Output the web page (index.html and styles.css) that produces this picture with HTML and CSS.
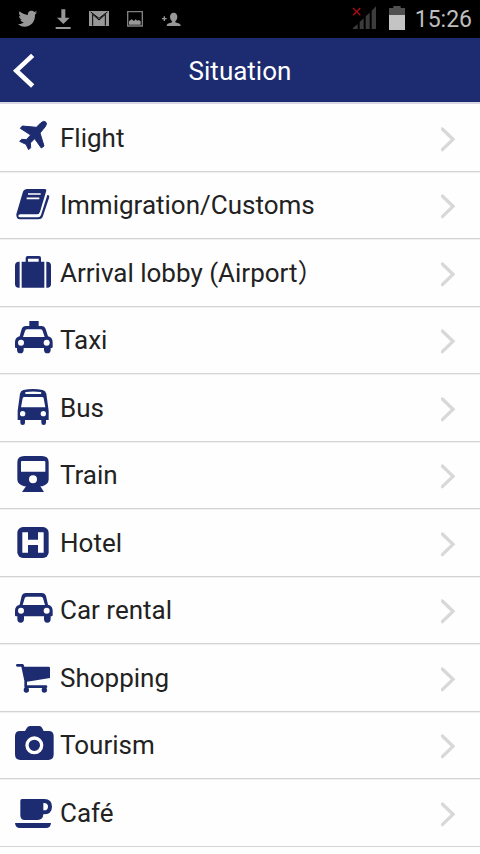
FILE: index.html
```html
<!DOCTYPE html>
<html lang="en">
<head>
<meta charset="utf-8">
<meta name="viewport" content="width=device-width, initial-scale=1">
<title>Situation</title>
<link rel="stylesheet" href="styles.css">
</head>
<body>
<svg class="defs" aria-hidden="true">
  <symbol id="chevron" viewBox="783 9 45 132"><path d="M787 48 819 79 787 110" fill="none" stroke="#d8d8d8" stroke-width="10" stroke-linecap="round" stroke-linejoin="miter"/></symbol>
</svg>
<div class="status">
  <div class="notices">
    <svg width="20" height="22" viewBox="51 24 60 66"><path d="M111 37c-2 1-4 2-6 2 3-2 4-4 5-6-2 1-5 2-7 3-2-3-5-4-8-4-8 0-13 6-11 13-10-1-18-4-25-11-4 6-1 12 3 15-2 0-4-1-5-2 0 6 4 10 9 12h-5c2 4 5 8 11 8-5 4-11 6-18 5 5 5 11 8 19 8 21 0 33-17 32-36 2-2 5-4 6-7z"/></svg>
    <svg width="16" height="22" viewBox="165 24 48 66"><path d="M184 28h12v25h13l-19 19-19-19h13zM167 81h45v6h-45z"/></svg>
    <svg width="20" height="22" viewBox="267 24 60 66"><path d="M267 33h60v45h-60z"/><path d="M278 77V43l19 17 19-17v34M272 36l25 19 25-19" fill="none" stroke="#000" stroke-width="3"/></svg>
    <svg width="16" height="22" viewBox="381 24 48 66"><path d="M383 35h44v43h-44z" fill="none" stroke="#808080" stroke-width="4"/><path d="M387 74V64l8-6 7 5 5-5 5 4 4-2 6 4v10z"/></svg>
    <svg width="20" height="22" viewBox="483 24 60 66"><path d="M491 49h4v5h5v4h-5v5h-4v-5h-5v-4h5zM521 38c7 0 11 5 11 12 0 6-3 11-6 14v3l13 4q3 2 3 7h-42q0-5 3-7l13-4v-3c-3-3-6-8-6-14 0-7 4-12 11-12z"/></svg>
  </div>
  <div class="device">
    <svg width="27" height="24" viewBox="93 18 81 72"><path d="M96 87v-3l14-12v15zM116 87V66l12-11v32zM134 87V49l12-11v49zM152 87V32l13-13v68z" fill="#3c3c3c"/><path d="M96 24l22 22m0-22L96 46" stroke="#a80c14" stroke-width="4"/></svg>
    <svg width="16" height="24" viewBox="204 18 48 72"><path d="M217 18h22v6h13v21h-48V24h13z" fill="#505050"/><path d="M204 45h48v45h-48z" fill="#c4c4c4"/></svg>
    <time>15:26</time>
  </div>
</div>
<header class="bar">
  <button class="back" type="button" aria-label="Back"><svg width="24" height="36" viewBox="36 162 72 108"><path d="M98 169 49 215 98 261" fill="none" stroke="#fff" stroke-width="14"/></svg></button>
  <h1>Situation</h1>
</header>
<main>
<ul class="list">
  <li><a href="#flight"><svg class="icon" viewBox="36 30 132 132"><path d="M138 52q4 5-3 14l-15 18 12 39-8 6-20-28-13 13 1 14-6 6-8-16-19-9 6-6 14 1 13-14-31-20 6-7 42 4 13-13q10-9 16-2z" stroke="#1d2b70" stroke-width="3" stroke-linejoin="round"/></svg><span>Flight</span><svg class="go"><use href="#chevron"/></svg></a></li>
  <li><a href="#immigration"><svg class="icon" viewBox="36 234 132 132"><path d="M82 252h52q7 0 4 8l-18 60q-2 8-10 8H61q-6 0-6 5 0 4 6 4h53q7 0 9-7l19-60q6-1 6 6l-19 57q-3 10-14 10H60q-12 0-11-15l19-65q3-11 14-11z"/><path d="M84 267h38M80 280h38" fill="none" stroke="#fff" stroke-width="5"/></svg><span>Immigration/Customs</span><svg class="go"><use href="#chevron"/></svg></a></li>
  <li><a href="#arrival"><svg class="icon" viewBox="36 30 132 132"><path d="M59 65v78h-3q-11 0-11-11V77q0-12 12-12zM139 65v78h3q11 0 11-11V77q0-12-12-12zM65 65h12V54q0-6 6-6h34q6 0 6 6v11h10v78H65zM84 56v9h32v-9z" fill-rule="evenodd"/></svg><span>Arrival lobby (Airport）</span><svg class="go"><use href="#chevron"/></svg></a></li>
  <li><a href="#taxi"><svg class="icon" viewBox="36 234 132 132"><path fill-rule="evenodd" d="M88 243h28v15h8q10 0 13 9l7 22q14 3 14 18v14q0 3-3 3h-3v5q0 11-10 11t-10-11v-5H71v5q0 11-10 11t-10-11v-5h-3q-3 0-3-3v-14q0-15 14-18l6-22q3-9 13-9h10zM81 268q-5 0-6 5l-6 18h65l-6-18q-1-5-6-5z"/><circle cx="63" cy="308" r="9" fill="#fff"/><circle cx="140" cy="308" r="9" fill="#fff"/></svg><span>Taxi</span><svg class="go"><use href="#chevron"/></svg></a></li>
  <li><a href="#bus"><svg class="icon" viewBox="36 30 132 132"><path fill-rule="evenodd" d="M70 45q29-6 58 0 9 2 11 11l7 51v28h-8v8q0 7-7 7t-7-7v-8H75v8q0 7-7 7t-7-7v-8h-8v-28l7-51q2-9 10-11zM78 51q-3 1-3 3t3 3h43q3 0 3-3t-3-3q-22-3-43 0zM73 66q-4 0-5 4l-5 27h73l-5-27q-1-4-5-4z"/><circle cx="68" cy="116" r="8" fill="#fff"/><circle cx="130" cy="116" r="8" fill="#fff"/></svg><span>Bus</span><svg class="go"><use href="#chevron"/></svg></a></li>
  <li><a href="#train"><svg class="icon" viewBox="36 234 132 132"><path fill-rule="evenodd" d="M73 243h53q20 0 20 19v51q0 15-19 21h-6l11 17H66l12-17h-6q-20-6-20-21v-51q0-19 21-19zM66 258q-3 0-3 3v29h73v-29q0-3-3-3z"/><circle cx="99" cy="313" r="12" fill="#fff"/></svg><span>Train</span><svg class="go"><use href="#chevron"/></svg></a></li>
  <li><a href="#hotel"><svg class="icon" viewBox="36 30 132 132"><rect x="52" y="51" width="94" height="93" rx="17"/><path d="M67 67h17v22h30V67h17v61h-17v-23H84v23H67z" fill="#fff"/></svg><span>Hotel</span><svg class="go"><use href="#chevron"/></svg></a></li>
  <li><a href="#car"><svg class="icon" viewBox="36 234 132 132"><path fill-rule="evenodd" d="M78 249h47q10 0 13 9l6 26q14 3 14 18v14q0 3-3 3h-3v8q0 11-10 11t-10-11v-8H72v8q0 11-10 11t-10-11v-8h-4q-3 0-3-3v-14q0-15 14-18l6-26q3-9 13-9zM80 260q-5 0-6 5l-6 20h67l-6-20q-1-5-6-5z"/><circle cx="63" cy="302" r="9" fill="#fff"/><circle cx="140" cy="302" r="9" fill="#fff"/></svg><span>Car rental</span><svg class="go"><use href="#chevron"/></svg></a></li>
  <li><a href="#shopping"><svg class="icon" viewBox="36 30 132 132"><path d="M52 57h16q4 0 5 8h73q4 0 4 4v30l-69 11v11h57q4 0 4 4t-4 4H76q-3 0-3-4v-18L64 65H52q-4 0-4-4t4-4z"/><circle cx="79" cy="135" r="8"/><circle cx="133" cy="135" r="8"/></svg><span>Shopping</span><svg class="go"><use href="#chevron"/></svg></a></li>
  <li><a href="#tourism"><svg class="icon" viewBox="36 234 132 132"><path d="M90 243h28q6 0 8 5l5 10h15q15 0 15 16v54q0 17-16 17H61q-16 0-16-17v-54q0-16 15-16h15l6-10q3-5 9-5z"/><circle cx="103" cy="301" r="22" fill="none" stroke="#fff" stroke-width="10"/></svg><span>Tourism</span><svg class="go"><use href="#chevron"/></svg></a></li>
  <li><a href="#cafe"><svg class="icon" viewBox="36 30 132 132"><path fill-rule="evenodd" d="M66 57h67q23 0 23 23t-26 23q-1 17-17 17H74q-13 0-13-14V62q0-5 5-5zM130 69v22q14 1 14-11t-14-11zM45 129h108q-1 15-15 15H60q-14 0-15-15z"/></svg><span>Café</span><svg class="go"><use href="#chevron"/></svg></a></li>
</ul>
</main>
</body>
</html>
```
FILE: styles.css
```css
* {
  box-sizing: border-box;
}

body {
  margin: 0;
  background: #fefefe;
  color: #222;
  font-family: Roboto, "Noto Sans CJK JP", sans-serif;
}

svg {
  display: block;
  flex: none;
}

.defs {
  position: absolute;
  width: 0;
  height: 0;
}

.status {
  display: flex;
  justify-content: space-between;
  height: 38px;
  padding: 0 8px 0 17px;
  background: #000;
}

.notices {
  display: flex;
  gap: 18px;
  padding-top: 8px;
  fill: #989898;
}

.device {
  display: flex;
  gap: 10px;
  padding-top: 6px;
}

.device time {
  color: #bebebe;
  font-size: 23px;
  line-height: 28px;
}

.bar {
  display: grid;
  grid-template-columns: 48px 1fr 48px;
  align-items: center;
  height: 66px;
  padding-top: 2px;
  background: #1d2b70;
  border-bottom: 2px solid #d8d8e4;
}

.back {
  padding: 0 0 0 12px;
  border: 0;
  background: none;
  cursor: pointer;
}

.bar h1 {
  margin: 0;
  color: #fff;
  font-size: 26px;
  font-weight: 400;
  line-height: 32px;
  text-align: center;
}

.list {
  margin: 0;
  padding: 0;
  list-style: none;
}

.list li {
  height: 68px;
  border-bottom: 1px solid #d4d4d4;
  box-shadow: 0 1px #f0f0f0;
}

.list li:nth-child(even) {
  height: 67px;
}

.list a {
  display: flex;
  padding: 11px 24px 0 12px;
  color: inherit;
  text-decoration: none;
}

.list span {
  flex: 1;
  padding-left: 4px;
  font-size: 26px;
  line-height: 44px;
}

.icon {
  width: 44px;
  height: 44px;
  fill: #1d2b70;
}

.go {
  width: 15px;
  height: 44px;
}

.list li:nth-child(odd) span,
.list li:nth-child(odd) .go {
  margin-top: 1px;
}
```
